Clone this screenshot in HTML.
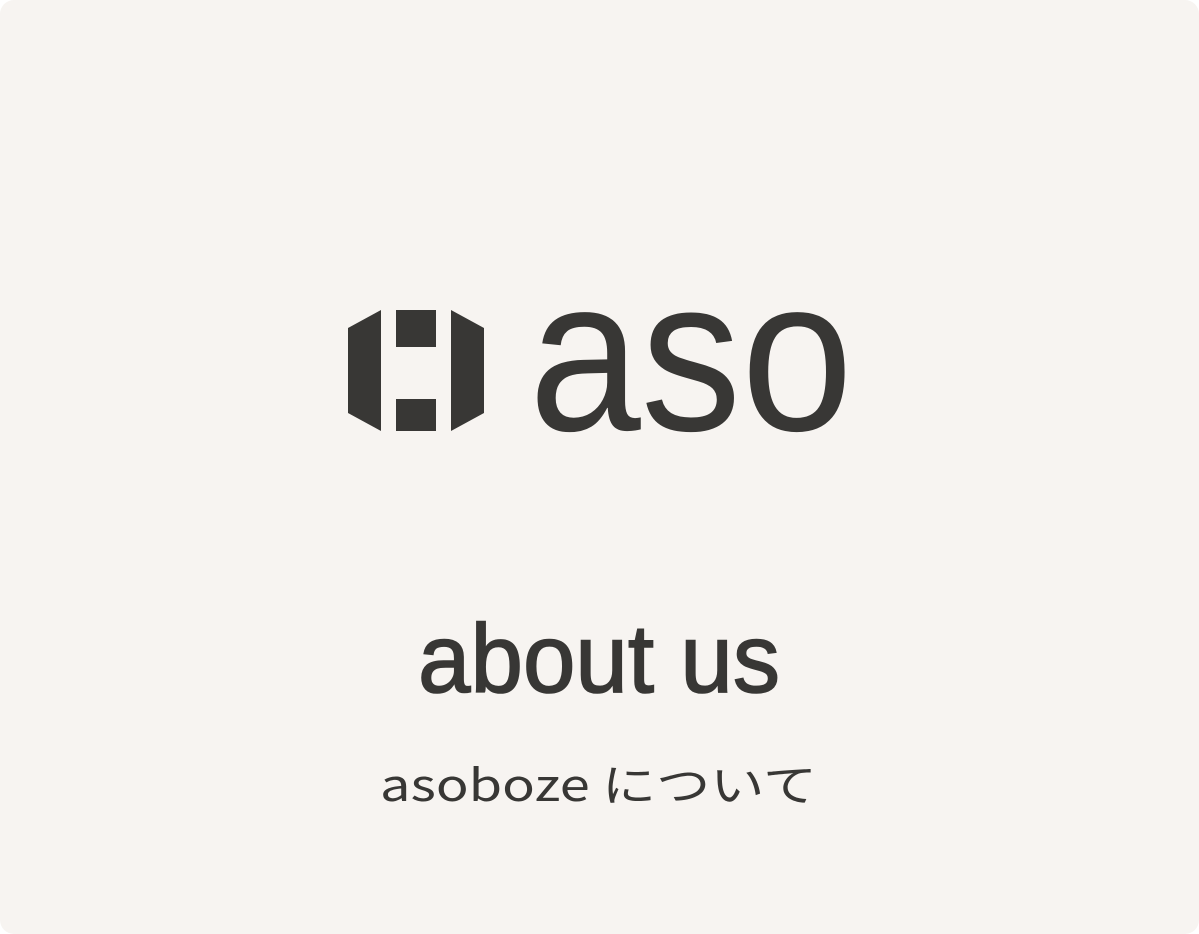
<!DOCTYPE html>
<html><head><meta charset="utf-8"><style>
html,body{margin:0;padding:0;background:#fff;width:1199px;height:934px;overflow:hidden}
svg{display:block}
</style></head><body>
<svg width="1199" height="934" viewBox="0 0 1199 934" xmlns="http://www.w3.org/2000/svg">
<rect x="0" y="0" width="1199" height="934" rx="14" fill="#f7f4f1"/>
<g fill="#383735">
<polygon points="348,328 381,310 381,431 348,413"/>
<rect x="396" y="310" width="40" height="37"/>
<rect x="396" y="399" width="40" height="32"/>
<polygon points="451,310 484,328 484,413 451,431"/>
<text x="529" y="430" font-family="Liberation Sans, sans-serif" font-size="219" textLength="324" lengthAdjust="spacingAndGlyphs">aso</text>
<text x="418" y="692" font-family="Liberation Sans, sans-serif" font-size="97" stroke="#383735" stroke-width="1.6" textLength="362" lengthAdjust="spacingAndGlyphs">about us</text>
<text x="380" y="801" font-family="'Noto Sans CJK JP', sans-serif" font-size="44" textLength="437" lengthAdjust="spacingAndGlyphs">asoboze について</text>
</g>
</svg>
</body></html>
